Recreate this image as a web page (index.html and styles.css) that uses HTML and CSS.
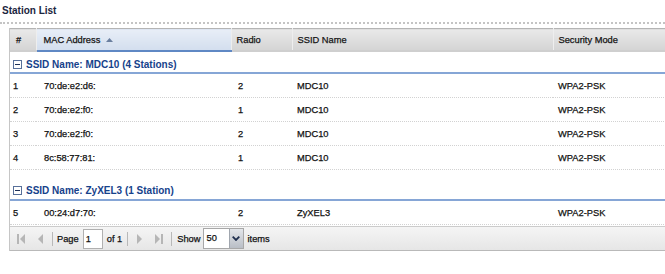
FILE: index.html
```html
<!DOCTYPE html>
<html>
<head>
<meta charset="utf-8">
<title>Station List</title>
<link rel="stylesheet" href="styles.css">
</head>
<body>
<div class="panel">
  <div class="title">Station List</div>
  <div class="grid">
    <table class="gt">
      <colgroup>
        <col class="w-num"><col class="w-mac"><col class="w-radio"><col class="w-ssid"><col class="w-sec">
      </colgroup>
      <thead>
        <tr>
          <th>#</th>
          <th class="sorted">MAC Address <svg class="sort-arrow" width="7" height="4" viewBox="0 0 7 4"><path d="M0 4 L3.5 0 L7 4 Z" fill="#6a7f9f"/></svg></th>
          <th>Radio</th>
          <th>SSID Name</th>
          <th>Security Mode</th>
        </tr>
      </thead>
      <tbody>
        <tr class="group g-first"><td colspan="5"><span class="gicon"></span>SSID Name: MDC10 (4 Stations)</td></tr>
        <tr class="row"><td>1</td><td>70:de:e2:d6:</td><td>2</td><td>MDC10</td><td>WPA2-PSK</td></tr>
        <tr class="row"><td>2</td><td>70:de:e2:f0:</td><td>1</td><td>MDC10</td><td>WPA2-PSK</td></tr>
        <tr class="row"><td>3</td><td>70:de:e2:f0:</td><td>2</td><td>MDC10</td><td>WPA2-PSK</td></tr>
        <tr class="row"><td>4</td><td>8c:58:77:81:</td><td>1</td><td>MDC10</td><td>WPA2-PSK</td></tr>
        <tr class="group"><td colspan="5"><span class="gicon"></span>SSID Name: ZyXEL3 (1 Station)</td></tr>
        <tr class="row"><td>5</td><td>00:24:d7:70:</td><td>2</td><td>ZyXEL3</td><td>WPA2-PSK</td></tr>
      </tbody>
    </table>
    <div class="pager">
      <span class="picon first"><svg width="8" height="10" viewBox="0 0 8 10"><rect x="0" y="0" width="2" height="10" fill="#b6b6b6"/><path d="M8 0 L3 5 L8 10 Z" fill="#b6b6b6"/></svg></span>
      <span class="picon prev"><svg width="6" height="10" viewBox="0 0 6 10"><path d="M6 0 L1 5 L6 10 Z" fill="#b6b6b6"/></svg></span>
      <span class="psep s1"></span>
      <span class="ptext t-page">Page</span>
      <span class="pinput">1</span>
      <span class="ptext t-of">of 1</span>
      <span class="psep s2"></span>
      <span class="picon next"><svg width="6" height="10" viewBox="0 0 6 10"><path d="M0 0 L5 5 L0 10 Z" fill="#b6b6b6"/></svg></span>
      <span class="picon last"><svg width="8" height="10" viewBox="0 0 8 10"><path d="M0 0 L5 5 L0 10 Z" fill="#b6b6b6"/><rect x="6" y="0" width="2" height="10" fill="#b6b6b6"/></svg></span>
      <span class="psep s3"></span>
      <span class="ptext t-show">Show</span>
      <span class="pselect"><span class="pselect-val">50</span><span class="pselect-btn"><svg width="8" height="5" viewBox="0 0 8 5"><path d="M0.7 0.7 L4 4 L7.3 0.7" fill="none" stroke="#1f2f4f" stroke-width="1.8"/></svg></span></span>
      <span class="ptext t-items">items</span>
    </div>
  </div>
</div>
</body>
</html>
```

FILE: styles.css
```css
html, body {
  margin: 0;
  padding: 0;
  background: #ffffff;
  overflow: hidden;
}

body {
  font-family: "Liberation Sans", Arial, sans-serif;
  font-size: 9.3px;
  color: #111111;
}

.panel {
  width: 680px;
}

.title {
  height: 22px;
  line-height: 22px;
  padding-left: 2px;
  font-weight: bold;
  font-size: 10px;
  color: #1b2640;
  border-bottom: 2px dotted #c4c4c4;
}

.grid {
  margin-top: 4px;
  margin-left: 9px;
  width: 670px;
  border-left: 1px solid #c6c6c6;
}

.gt {
  width: 670px;
  border-collapse: collapse;
  table-layout: fixed;
}

.w-num { width: 26px; }
.w-mac { width: 195px; }
.w-radio { width: 61px; }
.w-ssid { width: 261px; }
.w-sec { width: 127px; }

.gt th {
  height: 21px;
  padding: 0 0 0 5px;
  text-align: left;
  font-weight: normal;
  color: #141414;
  -webkit-text-stroke: 0.25px #141414;
  background: linear-gradient(#e9e9e9, #d4d4d4);
  border-top: 1px solid #b4b4b4;
  border-bottom: 2px solid #cfcfcf;
  border-right: 1px solid #eeeeee;
  white-space: nowrap;
}

.gt th:first-child { padding-left: 6px; }
.gt th:nth-child(2) { padding-left: 7px; }

.gt th.sorted {
  background: linear-gradient(#e8eef7, #d3deee);
  border-bottom: 2px solid #5f88c4;
}

.sort-arrow {
  margin-left: 3px;
  vertical-align: 1px;
}

.group td {
  height: 16px;
  padding: 4px 0 0 3px;
  font-weight: bold;
  font-size: 10px;
  color: #16428b;
  border-bottom: 2px solid #86a6d6;
  vertical-align: middle;
}

.group:not(.g-first) td {
  height: 18px;
  padding-top: 11px;
}

.gicon {
  display: inline-block;
  width: 7px;
  height: 7px;
  border: 1px solid #58709a;
  background: #ffffff;
  margin-right: 4px;
  vertical-align: -1px;
  position: relative;
}

.gicon::after {
  content: "";
  position: absolute;
  left: 1px;
  top: 3px;
  width: 5px;
  height: 1px;
  background: #1e3058;
}

.row td {
  height: 23px;
  padding: 0 0 0 5px;
  border-bottom: 1px dotted #d2d2d2;
  white-space: nowrap;
  color: #111111;
  -webkit-text-stroke: 0.25px #111111;
}

.row td:first-child { padding-left: 3px; }
.row td:nth-child(2) { padding-left: 8px; }
.row td:nth-child(3) { padding-left: 7px; }

.pager {
  margin-top: 1px;
  height: 23px;
  display: flex;
  align-items: center;
  background: linear-gradient(#f5f5f5, #e6e6e6);
  border-top: 1px solid #cccccc;
  border-bottom: 1px solid #b9b9b9;
  padding-left: 7px;
}

.picon {
  display: inline-flex;
  align-items: center;
}

.picon.prev { margin-left: 12px; }
.picon.next { margin-left: 9px; }
.picon.last { margin-left: 12px; }

.psep {
  width: 1px;
  height: 14px;
  background: #b8b8b8;
}

.psep.s1 { margin-left: 9px; }
.psep.s2 { margin-left: 5px; }
.psep.s3 { margin-left: 8px; }

.ptext {
  color: #111111;
  -webkit-text-stroke: 0.25px #111111;
}

.t-page { margin-left: 4px; }
.t-of { margin-left: 4px; }
.t-show { margin-left: 5px; }
.t-items { margin-left: 4px; }

.pinput {
  width: 16px;
  height: 18px;
  line-height: 18px;
  padding-left: 2px;
  border: 1px solid #b0b0b0;
  background: #ffffff;
  margin-left: 4px;
  -webkit-text-stroke: 0.25px #111111;
}

.pselect {
  display: inline-flex;
  height: 19px;
  border: 1px solid #a8a8a8;
  background: #ffffff;
  margin-left: 2px;
}

.pselect-val {
  width: 22px;
  line-height: 19px;
  padding-left: 3px;
  -webkit-text-stroke: 0.25px #111111;
}

.pselect-btn {
  width: 13px;
  display: inline-flex;
  align-items: center;
  justify-content: center;
  background: linear-gradient(#e3e6ea, #b9bec6);
  border-left: 1px solid #a0a6ae;
}
```
